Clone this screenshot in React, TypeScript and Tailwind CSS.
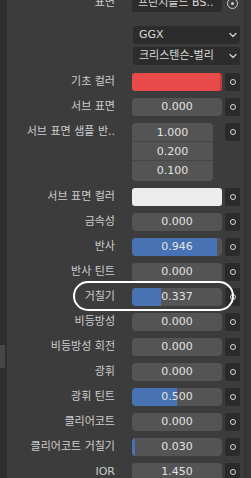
import React from "react";

const FONT = "font-['DejaVu_Sans','Noto_Sans_CJK_KR',sans-serif]";

function Label({ text }: { text: string }) {
  return (
    <div className="w-[108px] shrink-0 text-right text-[11px] leading-[18px] text-[#cdcdcd] whitespace-nowrap">
      {text}
    </div>
  );
}

function Dot() {
  return (
    <div className="ml-[3px] flex h-[18px] w-[15px] shrink-0 items-center justify-center rounded-[2px] bg-[#2b2b2b]">
      <div className="h-[6px] w-[6px] rounded-full border border-[#d6d6d6]" />
    </div>
  );
}

function Slider({ value, frac }: { value: string; frac: number }) {
  return (
    <div className="relative ml-[17px] h-[18px] w-[90px] shrink-0 overflow-hidden rounded-[4px] bg-[#545454]">
      {frac > 0 && (
        <div className="absolute inset-y-0 left-0 bg-[#4772b3]" style={{ width: `${frac * 100}%` }} />
      )}
      <div className="relative text-center text-[11px] leading-[18px] text-[#e2e2e2]">{value}</div>
    </div>
  );
}

function Row({ label, value, frac = 0, mt = "mt-[7px]" }: { label: string; value: string; frac?: number; mt?: string }) {
  return (
    <div className={`flex h-[18px] items-center ${mt}`}>
      <Label text={label} />
      <Slider value={value} frac={frac} />
      <Dot />
    </div>
  );
}

function Chevron() {
  return (
    <svg width="8" height="6" viewBox="0 0 8 6" className="shrink-0">
      <path d="M1 1.5 L4 4.5 L7 1.5" fill="none" stroke="#cfcfcf" strokeWidth="1.3" strokeLinecap="round" strokeLinejoin="round" />
    </svg>
  );
}

function Dropdown({ text, mt }: { text: string; mt: string }) {
  return (
    <div className={`flex h-[18px] items-center ${mt}`}>
      <div className="w-[108px] shrink-0" />
      <div className="ml-[18px] flex h-[18px] w-[107px] items-center justify-between rounded-[3px] bg-[#2c2c2c] pl-[6px] pr-[3px]">
        <span className="text-[11px] leading-[18px] text-[#dadada]">{text}</span>
        <Chevron />
      </div>
    </div>
  );
}

export default function App() {
  return (
    <div className={`relative flex h-[478px] w-[251px] overflow-hidden bg-[#3c3c3c] ${FONT}`}>
      {/* left strip */}
      <div className="flex w-[7px] shrink-0 flex-col border-r border-[#2f2f2f] bg-[#2d2d2d]">
        <div className="h-[345px]" />
        <div className="h-[23px] w-[5px] bg-[#474747]" />
      </div>

      {/* main */}
      <div className="flex w-[237px] shrink-0 flex-col">
        {/* top row: surface */}
        <div className="mt-[-6px] flex h-[18px] items-center">
          <Label text="표면" />
          <div className="ml-[17px] flex h-[18px] w-[90px] items-center rounded-[3px] bg-[#2c2c2c] pl-[6px]">
            <span className="text-[11px] leading-[18px] text-[#dadada] whitespace-nowrap">프린시플드 BS..</span>
          </div>
          <div className="ml-[3px] flex h-[18px] w-[15px] items-center justify-center">
            <div className="flex h-[11px] w-[11px] items-center justify-center rounded-full border border-[#cfcfcf]">
              <div className="h-[3px] w-[3px] rounded-full bg-[#cfcfcf]" />
            </div>
          </div>
        </div>

        <Dropdown text="GGX" mt="mt-[14px]" />
        <Dropdown text="크리스텐슨-벌리" mt="mt-[3px]" />

        {/* base color */}
        <div className="mt-[8px] flex h-[18px] items-center">
          <Label text="기초 컬러" />
          <div className="ml-[17px] h-[18px] w-[90px] rounded-[3px] border-r-2 border-[#c23c3c] bg-[#e84a4a]" />
          <Dot />
        </div>

        <Row label="서브 표면" value="0.000" />

        {/* subsurface radius vector */}
        <div className="mt-[7px] flex items-start">
          <Label text="서브 표면 샘플 반.." />
          <div className="ml-[17px] flex w-[81px] shrink-0 flex-col overflow-hidden rounded-[4px] bg-[#545454]">
            <div className="h-[19px] border-b border-[#474747] text-center text-[11px] leading-[19px] text-[#e2e2e2]">1.000</div>
            <div className="h-[19px] border-b border-[#474747] text-center text-[11px] leading-[19px] text-[#e2e2e2]">0.200</div>
            <div className="h-[20px] text-center text-[11px] leading-[20px] text-[#e2e2e2]">0.100</div>
          </div>
          <div className="ml-[9px]">
            <Dot />
          </div>
        </div>

        {/* subsurface color */}
        <div className="mt-[7px] flex h-[18px] items-center">
          <Label text="서브 표면 컬러" />
          <div className="ml-[17px] h-[18px] w-[90px] rounded-[3px] bg-[#ececec]" />
          <Dot />
        </div>

        <Row label="금속성" value="0.000" />
        <Row label="반사" value="0.946" frac={0.946} />
        <Row label="반사 틴트" value="0.000" />
        <Row label="거칠기" value="0.337" frac={0.32} />
        <Row label="비등방성" value="0.000" />
        <Row label="비등방성 회전" value="0.000" />
        <Row label="광휘" value="0.000" />
        <Row label="광휘 틴트" value="0.500" frac={0.5} />
        <Row label="클리어코트" value="0.000" />
        <Row label="클리어코트 거칠기" value="0.030" frac={0.03} />
        <Row label="IOR" value="1.450" />
      </div>

      {/* right strip */}
      <div className="w-[7px] shrink-0 border-l border-[#2e2e2e] bg-[#383838]" />

      {/* annotation ellipse */}
      <div className="pointer-events-none absolute left-[73px] top-[281px] h-[30px] w-[161px] rounded-[16px] border-2 border-white" />
    </div>
  );
}
